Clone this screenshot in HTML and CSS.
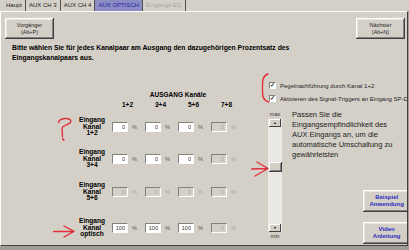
FILE: index.html
```html
<!DOCTYPE html>
<html lang="de">

<head>
    <meta charset="UTF-8">
    <title>AUX OPTISCH</title>
    <link rel="stylesheet" href="styles.css">
</head>

<body>
    <div class="tabs">
        <span class="tab">Haupt</span>
        <span class="tab">AUX CH 3</span>
        <span class="tab">AUX CH 4</span>
        <span class="tab active">AUX OPTISCH</span>
        <span class="tab disabled">Eingangs-EQ</span>
    </div>

    <div class="panel">
        <div class="nav">
            <button class="btn">Vorgänger<br>(Alt+P)</button>
            <button class="btn">Nächster<br>(Alt+N)</button>
        </div>

        <p class="intro">Bitte wählen Sie für jedes Kanalpaar am Ausgang den dazugehörigen Prozentsatz des<br>Eingangskanalpaars aus.</p>

        <div class="main">
            <div class="matrix">
                <div class="title">AUSGANG Kanäle</div>
                <div></div>
                <div class="head">1+2</div>
                <div class="head">3+4</div>
                <div class="head">5+6</div>
                <div class="head">7+8</div>

                <div class="lab">Eingang<br>Kanal<br>1+2</div>
                <div class="cell"><input class="pct" value="0" readonly><span class="sign">%</span></div>
                <div class="cell"><input class="pct" value="0" readonly><span class="sign">%</span></div>
                <div class="cell"><input class="pct" value="0" readonly><span class="sign">%</span></div>
                <div class="cell off"><input class="pct" value="0" disabled><span class="sign">%</span></div>

                <div class="lab">Eingang<br>Kanal<br>3+4</div>
                <div class="cell"><input class="pct" value="0" readonly><span class="sign">%</span></div>
                <div class="cell"><input class="pct" value="0" readonly><span class="sign">%</span></div>
                <div class="cell"><input class="pct" value="0" readonly><span class="sign">%</span></div>
                <div class="cell off"><input class="pct" value="0" disabled><span class="sign">%</span></div>

                <div class="lab">Eingang<br>Kanal<br>5+6</div>
                <div class="cell off"><input class="pct" value="0" disabled><span class="sign">%</span></div>
                <div class="cell off"><input class="pct" value="0" disabled><span class="sign">%</span></div>
                <div class="cell off"><input class="pct" value="0" disabled><span class="sign">%</span></div>
                <div class="cell off"><input class="pct" value="0" disabled><span class="sign">%</span></div>

                <div class="lab">Eingang<br>Kanal<br>optisch</div>
                <div class="cell"><input class="pct" value="100" readonly><span class="sign">%</span></div>
                <div class="cell"><input class="pct" value="100" readonly><span class="sign">%</span></div>
                <div class="cell"><input class="pct" value="100" readonly><span class="sign">%</span></div>
                <div class="cell off"><input class="pct" value="0" disabled><span class="sign">%</span></div>
            </div>

            <div class="side">
                <div class="checks">
                    <label class="check"><span class="box">&#10003;</span>Pegelnachführung durch Kanal 1+2</label>
                    <label class="check"><span class="box">&#10003;</span>Aktivieren des Signal-Triggers an Eingang SP-DIF</label>
                </div>

                <div class="sens">
                    <div class="slider">
                        <span class="end">max</span>
                        <div class="track">
                            <span class="arrow-btn">&#9650;</span>
                            <span class="thumb"></span>
                            <span class="arrow-btn down">&#9660;</span>
                        </div>
                        <span class="end">min</span>
                    </div>

                    <div class="info">
                        <p class="hint">Passen Sie die<br>Eingangsempfindlichkeit des<br>AUX Eingangs an, um die<br>automatische Umschaltung zu<br>gewährleisten</p>
                        <button class="btn help">Beispiel<br>Anwendung</button>
                        <button class="btn help">Video<br>Anleitung</button>
                    </div>
                </div>
            </div>
        </div>

        <!-- rote Markierungen -->
        <svg class="mark mark-q" viewBox="0 0 16 25" width="16" height="25">
            <path d="M1.5 5.5 C2.5 1, 13 0, 13.8 4 C14.3 8, 5 7.5, 5 11.5 L5.5 19.5 M5.5 21.5 L7 23.5" />
        </svg>
        <svg class="mark mark-a1" viewBox="0 0 22 13" width="22" height="13">
            <path d="M0.5 6.5 L20.5 6.5 M11 1 L21 6.3 L11 12" />
        </svg>
        <svg class="mark mark-a2" viewBox="0 0 18 16" width="18" height="16">
            <path d="M0.5 8 L16.5 7.5 M6 1 L17 7.5 L4 15" />
        </svg>
        <svg class="mark mark-b" viewBox="0 0 8 30" width="8" height="30">
            <path d="M7 1 C1 3, 1.5 9, 1.5 15 C1.5 22, 1 27, 7.5 29" />
        </svg>
    </div>
</body>

</html>
```

FILE: styles.css
```css
body {
    margin: 0;
    width: 409px;
    height: 250px;
    overflow: hidden;
    background-color: #a19d96;
    font-family: "Liberation Sans", Arial, sans-serif;
    color: #000;
}

.tabs {
    display: flex;
    height: 11px;
    padding-left: 3px;
    background-color: #d4d0c8;
    font-size: 6px;
    line-height: 11px;
}

.tab {
    padding: 0 3px;
    border-right: 1px solid #505050;
    color: #222;
}

.tab.active {
    background-color: #8c8cc4;
    color: #2424a8;
}

.tab.disabled {
    color: #aaa69e;
}

.panel {
    position: relative;
    width: 408px;
    height: 235px;
    box-sizing: border-box;
    background-color: #d4d0c8;
    border-top: 1px solid #fff;
    border-left: 1px solid #fff;
    border-right: 1px solid #404040;
    border-bottom: 1px solid #404040;
    overflow: hidden;
}

.nav {
    display: flex;
    justify-content: space-between;
    padding: 6px 2px 0 4px;
}

.btn {
    width: 49px;
    height: 21px;
    padding: 0;
    border: none;
    background-color: #d4d0c8;
    box-shadow: inset -1px -1px #404040, inset 1px 1px #fff, inset -2px -2px #808080, inset 2px 2px #e6e3dd;
    font-family: inherit;
    font-size: 5.5px;
    line-height: 7px;
    color: #222;
}

.intro {
    margin: 4px 0 0 11px;
    font-size: 6.8px;
    font-weight: bold;
    line-height: 10px;
}

.main {
    display: flex;
}

/* Tabelle Eingang -> Ausgang */
.matrix {
    display: grid;
    grid-template-columns: 40px repeat(4, 33px);
    grid-template-rows: 10px 17px 32px 33px 36px 20px;
    margin: 27px 0 0 71px;
    font-weight: bold;
    font-size: 6.5px;
}

.title {
    grid-column: 2 / 6;
    text-align: center;
    line-height: 9px;
}

.head {
    padding-left: 10px;
    line-height: 9px;
}

.lab {
    text-align: center;
    line-height: 6.7px;
    font-size: 6.6px;
}

.cell {
    display: flex;
    align-items: center;
    height: 20px;
}

.pct {
    width: 16px;
    height: 10px;
    box-sizing: border-box;
    padding: 0 2px;
    border: 1px solid;
    border-color: #808080 #fff #fff #808080;
    background-color: #fff;
    font-family: inherit;
    font-size: 5.5px;
    text-align: right;
    color: #333;
    outline: none;
}

.sign {
    margin-left: 4px;
    font-weight: normal;
    font-size: 5.5px;
    color: #555;
}

.off .pct {
    background-color: #d4d0c8;
    color: #a8a59f;
}

.off .sign {
    color: #a8a59f;
}

/* rechte Spalte */
.side {
    flex: 1;
    padding-left: 24px;
}

.checks {
    margin-top: 16px;
    padding-left: 1px;
}

.check {
    display: flex;
    align-items: center;
    height: 13px;
    font-size: 6px;
    white-space: nowrap;
    color: #222;
}

.box {
    width: 7px;
    height: 7px;
    box-sizing: border-box;
    margin-right: 4px;
    border: 1px solid;
    border-color: #808080 #fff #fff #808080;
    background-color: #fff;
    font-size: 6px;
    line-height: 5px;
    text-align: center;
    font-weight: bold;
}

.sens {
    display: flex;
    margin-top: 5px;
}

.slider {
    display: flex;
    flex-direction: column;
    align-items: center;
    width: 14px;
}

.end {
    font-size: 5.5px;
    line-height: 9px;
    color: #333;
}

.track {
    display: flex;
    flex-direction: column;
    align-items: center;
    width: 14px;
    height: 113px;
    background-color: #ebe9e5;
}

.arrow-btn {
    width: 12px;
    height: 8px;
    box-sizing: border-box;
    background-color: #d4d0c8;
    box-shadow: inset -1px -1px #404040, inset 1px 1px #fff;
    font-size: 3.5px;
    line-height: 8px;
    text-align: center;
    color: #000;
}

.arrow-btn.down {
    margin-top: auto;
}

.thumb {
    width: 13px;
    height: 10px;
    margin-top: 35px;
    background-color: #d4d0c8;
    box-shadow: inset -1px -1px #404040, inset 1px 1px #fff, inset -2px -2px #808080;
}

.info {
    display: flex;
    flex-direction: column;
    flex: 1;
    height: 134px;
    margin-left: 10px;
}

.hint {
    margin: 0;
    font-size: 7.5px;
    line-height: 10px;
    color: #222;
}

.btn.help {
    align-self: flex-end;
    width: 47px;
    height: 22px;
    margin-right: 3px;
    font-weight: bold;
    font-size: 6px;
    color: #2b2bc0;
}

.btn.help + .btn.help {
    margin-top: 10px;
}

.hint + .btn.help {
    margin-top: auto;
}

/* rote Handmarkierungen */
.mark {
    position: absolute;
    fill: none;
    stroke: #e0303c;
    stroke-width: 1.4;
    stroke-linecap: round;
    stroke-linejoin: round;
}

.mark-q {
    left: 56px;
    top: 105px;
}

.mark-a1 {
    left: 52px;
    top: 213px;
}

.mark-a2 {
    left: 250px;
    top: 149px;
}

.mark-b {
    left: 260px;
    top: 61px;
}
```
